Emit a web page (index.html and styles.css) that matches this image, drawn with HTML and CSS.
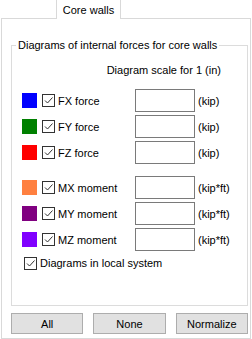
FILE: index.html
```html
<!DOCTYPE html>
<html lang="en">
<head>
  <meta charset="UTF-8">
  <title>Core walls</title>
  <link rel="stylesheet" href="styles.css">
</head>
<body>

  <div class="tabs">
    <div class="tab">Core walls</div>
  </div>

  <div class="panel">
    <div class="group">
      <div class="group-title">Diagrams of internal forces for core walls</div>
      <div class="scale">Diagram scale for 1 (in)</div>

      <div class="rows">
        <div class="row">
          <span class="swatch fx"></span>
          <label class="check"><span class="box"><svg viewBox="0 0 11 11"><path d="M2 5.5 L4.5 8 L9.5 2.5"/></svg></span>FX force</label>
          <input class="num" type="text">
          <span class="unit">(kip)</span>
        </div>
        <div class="row">
          <span class="swatch fy"></span>
          <label class="check"><span class="box"><svg viewBox="0 0 11 11"><path d="M2 5.5 L4.5 8 L9.5 2.5"/></svg></span>FY force</label>
          <input class="num" type="text">
          <span class="unit">(kip)</span>
        </div>
        <div class="row">
          <span class="swatch fz"></span>
          <label class="check"><span class="box"><svg viewBox="0 0 11 11"><path d="M2 5.5 L4.5 8 L9.5 2.5"/></svg></span>FZ force</label>
          <input class="num" type="text">
          <span class="unit">(kip)</span>
        </div>
      </div>

      <div class="rows moments">
        <div class="row">
          <span class="swatch mx"></span>
          <label class="check"><span class="box"><svg viewBox="0 0 11 11"><path d="M2 5.5 L4.5 8 L9.5 2.5"/></svg></span>MX moment</label>
          <input class="num" type="text">
          <span class="unit">(kip*ft)</span>
        </div>
        <div class="row">
          <span class="swatch my"></span>
          <label class="check"><span class="box"><svg viewBox="0 0 11 11"><path d="M2 5.5 L4.5 8 L9.5 2.5"/></svg></span>MY moment</label>
          <input class="num" type="text">
          <span class="unit">(kip*ft)</span>
        </div>
        <div class="row">
          <span class="swatch mz"></span>
          <label class="check"><span class="box"><svg viewBox="0 0 11 11"><path d="M2 5.5 L4.5 8 L9.5 2.5"/></svg></span>MZ moment</label>
          <input class="num" type="text">
          <span class="unit">(kip*ft)</span>
        </div>
      </div>

      <label class="check local"><span class="box"><svg viewBox="0 0 11 11"><path d="M2 5.5 L4.5 8 L9.5 2.5"/></svg></span>Diagrams in local system</label>
    </div>

    <div class="buttons">
      <button>All</button>
      <button>None</button>
      <button>Normalize</button>
    </div>
  </div>

</body>
</html>
```

FILE: styles.css
```css
* {
  box-sizing: border-box;
}
body {
  margin: 0;
  background: #fff;
  font-family: "Liberation Sans", Arial, sans-serif;
  font-size: 11px;
  color: #000;
}
.tabs {
  display: flex;
  height: 18px;
  padding-left: 56px;
}
.tab {
  position: relative;
  z-index: 1;
  width: 65px;
  height: 19px;
  border: 1px solid #d9d9d9;
  border-top: none;
  border-bottom: none;
  background: #fff;
  text-align: center;
  line-height: 20px;
}
.panel {
  margin-left: 1px;
  width: 250px;
  height: 321px;
  border: 1px solid #d9d9d9;
}
.group {
  position: relative;
  margin: 26px 2px 0 9px;
  height: 261px;
  border: 1px solid #dcdcdc;
}
/* title sits on the top border like a legend */
.group-title {
  position: absolute;
  top: -8px;
  left: 4px;
  padding: 0 2px;
  background: #fff;
  line-height: 14px;
  white-space: nowrap;
}
.scale {
  margin-top: 17px;
  padding-right: 26px;
  text-align: right;
  line-height: 14px;
}
.rows {
  display: flex;
  flex-direction: column;
  gap: 3px;
  margin-top: 12px;
}
.rows.moments {
  margin-top: 12px;
}
.row {
  display: flex;
  align-items: center;
  height: 23px;
  padding-left: 10px;
}
.swatch {
  width: 15px;
  height: 15px;
  margin-right: 5px;
}
.fx { background: #0000ff; }
.fy { background: #008000; }
.fz { background: #ff0000; }
.mx { background: #ff8040; }
.my { background: #800080; }
.mz { background: #8000ff; }
.check {
  display: flex;
  align-items: center;
  width: 93px;
  line-height: 14px;
}
.box {
  width: 13px;
  height: 13px;
  border: 1px solid #333;
  margin-right: 3px;
  background: #fff;
}
.box svg {
  display: block;
  width: 11px;
  height: 11px;
}
.box path {
  fill: none;
  stroke: #333;
  stroke-width: 1;
}
.num {
  width: 60px;
  height: 23px;
  margin: 0;
  padding: 0;
  border: 1px solid #7a7a7a;
  font: inherit;
}
.unit {
  margin-left: 3px;
}
.local {
  width: auto;
  margin-top: 5px;
  padding-left: 12px;
}
.buttons {
  display: grid;
  grid-template-columns: repeat(3, 1fr);
  gap: 10px;
  margin: 7px 2px 0 9px;
}
.buttons button {
  height: 21px;
  margin: 0;
  padding: 0;
  border: 1px solid #adadad;
  background: #e1e1e1;
  font: inherit;
  color: #000;
}
```
